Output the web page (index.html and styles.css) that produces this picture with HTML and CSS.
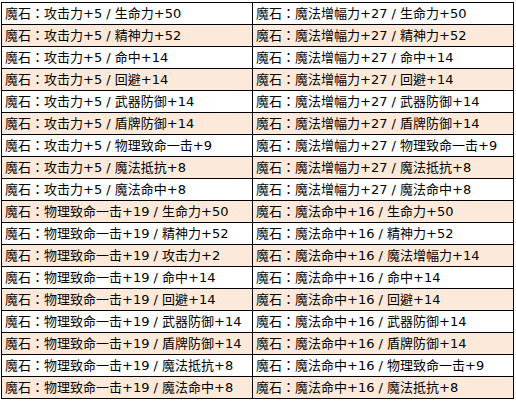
FILE: index.html
```html
<!DOCTYPE html>
<html>
<head>
<meta charset="utf-8">
<link rel="stylesheet" href="styles.css">
</head>
<body>
<table class="stones">
<colgroup><col class="c1"><col class="c2"></colgroup>
<tbody>
<tr><td>魔石：攻击力+5 / 生命力+50</td><td>魔石：魔法增幅力+27 / 生命力+50</td></tr>
<tr class="alt"><td>魔石：攻击力+5 / 精神力+52</td><td>魔石：魔法增幅力+27 / 精神力+52</td></tr>
<tr><td>魔石：攻击力+5 / 命中+14</td><td>魔石：魔法增幅力+27 / 命中+14</td></tr>
<tr class="alt"><td>魔石：攻击力+5 / 回避+14</td><td>魔石：魔法增幅力+27 / 回避+14</td></tr>
<tr><td>魔石：攻击力+5 / 武器防御+14</td><td>魔石：魔法增幅力+27 / 武器防御+14</td></tr>
<tr class="alt"><td>魔石：攻击力+5 / 盾牌防御+14</td><td>魔石：魔法增幅力+27 / 盾牌防御+14</td></tr>
<tr><td>魔石：攻击力+5 / 物理致命一击+9</td><td>魔石：魔法增幅力+27 / 物理致命一击+9</td></tr>
<tr class="alt"><td>魔石：攻击力+5 / 魔法抵抗+8</td><td>魔石：魔法增幅力+27 / 魔法抵抗+8</td></tr>
<tr><td>魔石：攻击力+5 / 魔法命中+8</td><td>魔石：魔法增幅力+27 / 魔法命中+8</td></tr>
<tr class="alt"><td>魔石：物理致命一击+19 / 生命力+50</td><td>魔石：魔法命中+16 / 生命力+50</td></tr>
<tr><td>魔石：物理致命一击+19 / 精神力+52</td><td>魔石：魔法命中+16 / 精神力+52</td></tr>
<tr class="alt"><td>魔石：物理致命一击+19 / 攻击力+2</td><td>魔石：魔法命中+16 / 魔法增幅力+14</td></tr>
<tr><td>魔石：物理致命一击+19 / 命中+14</td><td>魔石：魔法命中+16 / 命中+14</td></tr>
<tr class="alt"><td>魔石：物理致命一击+19 / 回避+14</td><td>魔石：魔法命中+16 / 回避+14</td></tr>
<tr><td>魔石：物理致命一击+19 / 武器防御+14</td><td>魔石：魔法命中+16 / 武器防御+14</td></tr>
<tr class="alt"><td>魔石：物理致命一击+19 / 盾牌防御+14</td><td>魔石：魔法命中+16 / 盾牌防御+14</td></tr>
<tr><td>魔石：物理致命一击+19 / 魔法抵抗+8</td><td>魔石：魔法命中+16 / 物理致命一击+9</td></tr>
<tr class="alt"><td>魔石：物理致命一击+19 / 魔法命中+8</td><td>魔石：魔法命中+16 / 魔法抵抗+8</td></tr>
</tbody>
</table>
</body>
</html>
```
FILE: styles.css
```css
html, body {
  margin: 0;
  padding: 0;
  background: #ffffff;
}
body {
  padding: 2px 0 0 1px;
  font-family: "DejaVu Sans", "Noto Sans CJK TC", "Noto Sans CJK SC", sans-serif;
  font-size: 13px;
  color: #000000;
}
.stones {
  border-collapse: collapse;
  table-layout: fixed;
  width: 512px;
}
.c1 { width: 251px; }
.c2 { width: 261px; }
.stones td {
  border: 1px solid #000000;
  height: 21px;
  padding: 0 0 0 3px;
  line-height: 21px;
  white-space: nowrap;
  overflow: hidden;
  box-sizing: border-box;
}
.stones tr.alt td {
  background: #fde9d9;
}
```
